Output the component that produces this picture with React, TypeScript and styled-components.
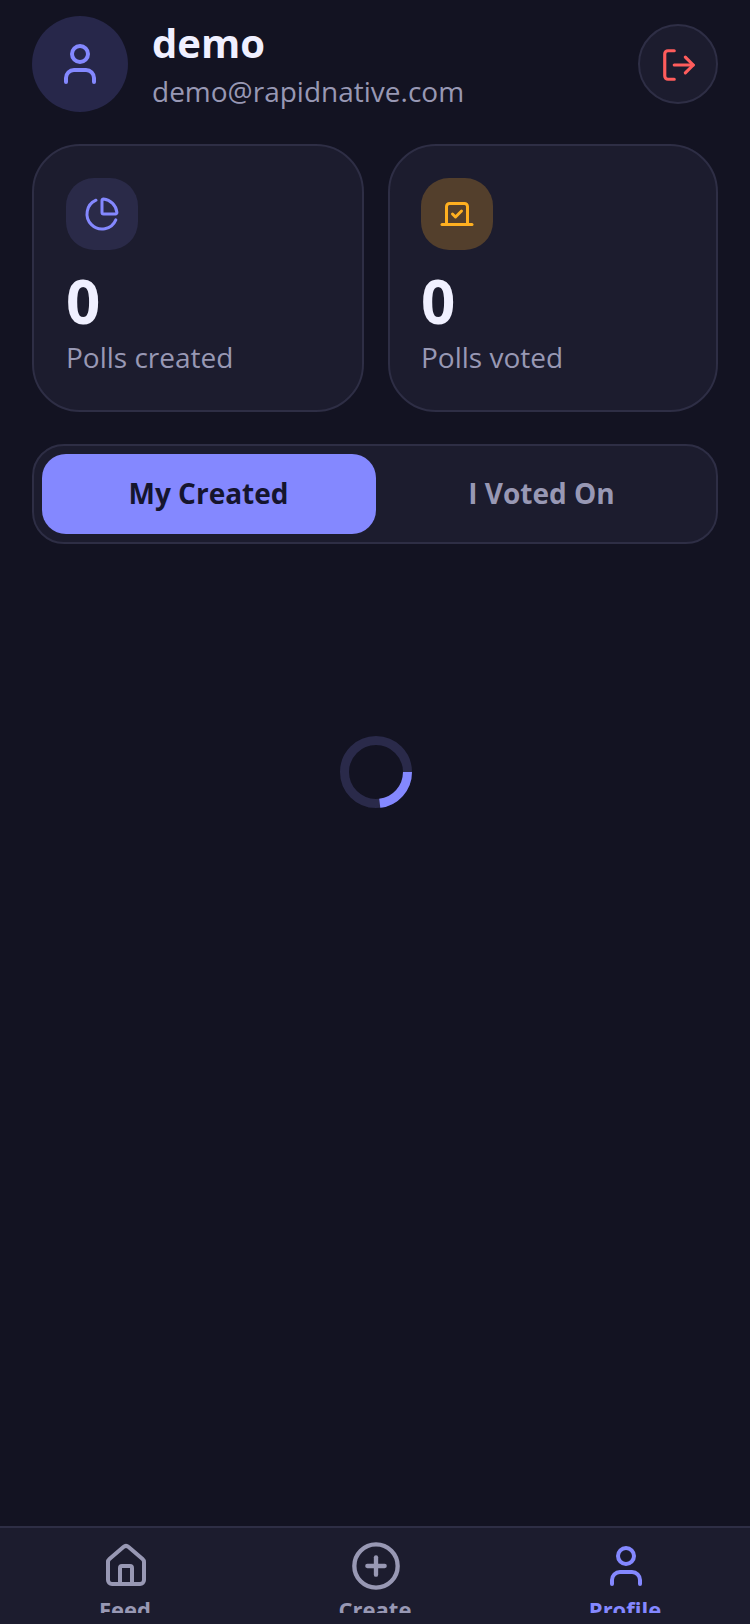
import React from "react"
import styled, { createGlobalStyle } from "styled-components"
import { ChartPie, CirclePlus, House, LogOut, User, Vote } from "lucide-react"

const GlobalStyle = createGlobalStyle`
  html, body {
    margin: 0;
    padding: 0;
    background: #131322;
  }
  * {
    box-sizing: border-box;
  }
`

const Screen = styled.div`
  width: 750px;
  height: 1624px;
  display: flex;
  flex-direction: column;
  background: #131322;
  font-family: "Open Sans", "Noto Sans", sans-serif;
  overflow: hidden;
`

const Content = styled.div`
  flex: 1;
  display: flex;
  flex-direction: column;
  padding: 16px 32px 0;
`

const Header = styled.div`
  display: flex;
  align-items: center;
  justify-content: space-between;
`

const UserInfo = styled.div`
  display: flex;
  align-items: center;
  gap: 24px;
`

const Avatar = styled.div`
  width: 96px;
  height: 96px;
  border-radius: 50%;
  background: #27274a;
  color: #8488ff;
  display: flex;
  align-items: center;
  justify-content: center;
`

const UserText = styled.div`
  display: flex;
  flex-direction: column;
  margin-top: -3px;
`

const UserName = styled.div`
  font-size: 40px;
  line-height: 56px;
  font-weight: 700;
  color: #f0f0ff;
`

const UserEmail = styled.div`
  font-size: 28px;
  line-height: 40px;
  color: #9898b4;
`

const LogoutButton = styled.button`
  width: 80px;
  height: 80px;
  padding: 2px 0 0 2px;
  border-radius: 50%;
  border: 2px solid #2e2e45;
  background: #1c1c2e;
  color: #ff5c5c;
  display: flex;
  align-items: center;
  justify-content: center;
`

const Stats = styled.div`
  display: grid;
  grid-template-columns: 332px 330px;
  gap: 24px;
  margin-top: 32px;
`

const StatCard = styled.div`
  height: 268px;
  padding: 32px;
  border-radius: 48px;
  border: 2px solid #2e2e45;
  background: #1c1c2e;

  &:last-child {
    padding-left: 31px;
  }
`

const StatIcon = styled.div<{ $bg: string; $color: string }>`
  width: 72px;
  height: 72px;
  border-radius: 28px;
  background: ${({ $bg }) => $bg};
  color: ${({ $color }) => $color};
  display: flex;
  align-items: center;
  justify-content: center;
`

const StatValue = styled.div`
  margin-top: 16px;
  font-size: 60px;
  line-height: 71px;
  font-weight: 700;
  color: #f0f0ff;
`

const StatLabel = styled.div`
  font-size: 28px;
  line-height: 40px;
  color: #9898b4;
`

const Tabs = styled.div`
  display: grid;
  grid-template-columns: 334px 1fr;
  height: 100px;
  margin-top: 32px;
  padding: 8px;
  border-radius: 32px;
  border: 2px solid #2e2e45;
  background: #1c1c2e;
`

const Tab = styled.div<{ $active?: boolean }>`
  display: flex;
  align-items: center;
  justify-content: center;
  padding: 0 1px 2px 0;
  border-radius: 24px;
  font-size: 28px;
  font-weight: 700;
  background: ${({ $active }) => ($active ? "#8488ff" : "transparent")};
  color: ${({ $active }) => ($active ? "#15152e" : "#9898b4")};
`

const Loading = styled.div`
  display: flex;
  justify-content: center;
  padding: 192px 0 0 2px;
`

const TabBar = styled.nav`
  height: 98px;
  display: grid;
  grid-template-columns: repeat(3, 1fr);
  border-top: 2px solid #2e2e45;
  background: #1c1c2e;
`

const TabItem = styled.div<{ $active?: boolean }>`
  height: 85px;
  overflow: hidden;
  display: flex;
  flex-direction: column;
  align-items: center;
  padding-top: 14px;
  color: ${({ $active }) => ($active ? "#8488ff" : "#9898b4")};
`

const TabIconSlot = styled.div`
  flex: 0 0 48px;
  min-height: 0;
  width: 60px;
  padding-left: 2px;
  display: flex;
  align-items: center;
  justify-content: center;
`

const TabLabel = styled.div`
  margin-top: 4px;
  font-size: 22px;
  line-height: 30px;
  font-weight: 700;
`

// the loader in the reference is caught at about 83 degrees of arc, from 3 o'clock
const Spinner = () => (
  <svg width={72} height={72} viewBox="0 0 72 72" fill="none">
    <circle cx={36} cy={36} r={31.5} stroke="#2a2a4a" strokeWidth={9} />
    <circle
      cx={36}
      cy={36}
      r={31.5}
      stroke="#8488ff"
      strokeWidth={9}
      strokeDasharray="45.6 198"
    />
  </svg>
)

export default function App() {
  return (
    <>
      <GlobalStyle />
      <Screen>
        <Content>
          <Header>
            <UserInfo>
              <Avatar>
                <User size={48} />
              </Avatar>
              <UserText>
                <UserName>demo</UserName>
                <UserEmail>demo@rapidnative.com</UserEmail>
              </UserText>
            </UserInfo>
            <LogoutButton>
              <LogOut size={38} />
            </LogoutButton>
          </Header>

          <Stats>
            <StatCard>
              <StatIcon $bg="#2a2a48" $color="#8488ff">
                <ChartPie size={36} />
              </StatIcon>
              <StatValue>0</StatValue>
              <StatLabel>Polls created</StatLabel>
            </StatCard>
            <StatCard>
              <StatIcon $bg="#533f2c" $color="#ffb020">
                <Vote size={36} />
              </StatIcon>
              <StatValue>0</StatValue>
              <StatLabel>Polls voted</StatLabel>
            </StatCard>
          </Stats>

          <Tabs>
            <Tab $active>My Created</Tab>
            <Tab>I Voted On</Tab>
          </Tabs>

          <Loading>
            <Spinner />
          </Loading>
        </Content>

        <TabBar>
          <TabItem>
            <TabIconSlot>
              <House size={48} />
            </TabIconSlot>
            <TabLabel>Feed</TabLabel>
          </TabItem>
          <TabItem>
            <TabIconSlot>
              <CirclePlus size={52} />
            </TabIconSlot>
            <TabLabel>Create</TabLabel>
          </TabItem>
          <TabItem $active>
            <TabIconSlot>
              <User size={48} />
            </TabIconSlot>
            <TabLabel>Profile</TabLabel>
          </TabItem>
        </TabBar>
      </Screen>
    </>
  )
}
